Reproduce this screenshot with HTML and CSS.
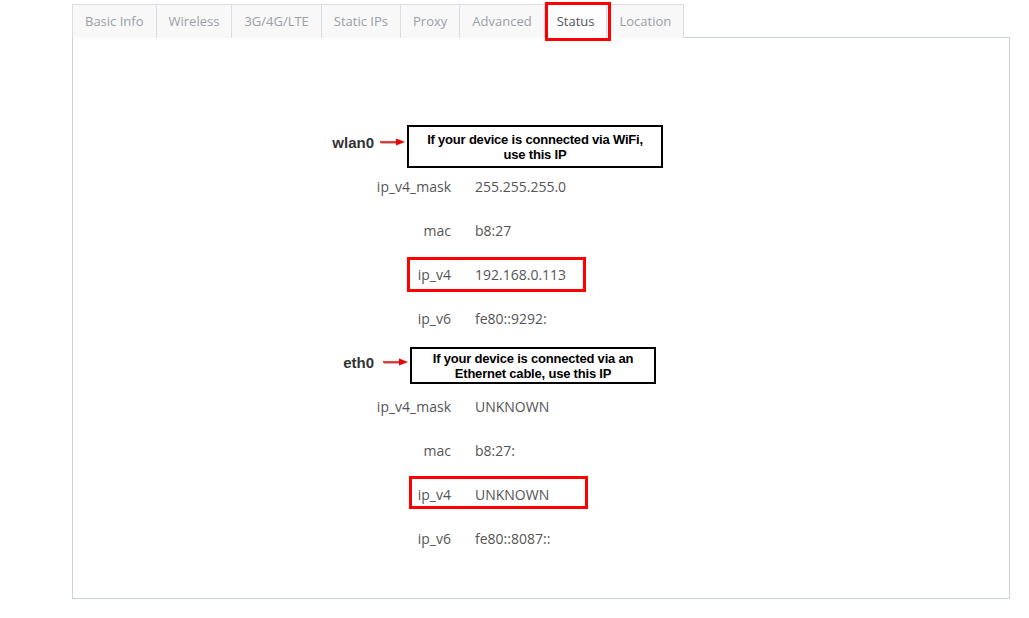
FILE: index.html
```html
<!DOCTYPE html>
<html>
<head>
<meta charset="utf-8">
<link rel="stylesheet" href="styles.css">
</head>
<body>
<div class="page">
  <ul class="tabs">
    <li class="tab">Basic Info</li>
    <li class="tab">Wireless</li>
    <li class="tab">3G/4G/LTE</li>
    <li class="tab">Static IPs</li>
    <li class="tab">Proxy</li>
    <li class="tab">Advanced</li>
    <li class="tab active">Status</li>
    <li class="tab">Location</li>
  </ul>
  <div class="panel">
    <div class="group">
      <div class="iface">
        <span class="iface-name">wlan0</span>
        <svg class="arrow" width="25" height="10" viewBox="0 0 25 10"><line x1="1" y1="6" x2="18" y2="6" stroke="#bbb" stroke-width="2"/><line x1="0" y1="5" x2="17" y2="5" stroke="#e00" stroke-width="1.5"/><polygon points="16,1.5 25,5 16,8.5" fill="#e00"/></svg>
        <div class="callout callout-wifi">If your device is connected via WiFi,<br>use this IP</div>
      </div>
      <div class="row"><span class="key">ip_v4_mask</span><span class="val">255.255.255.0</span></div>
      <div class="row"><span class="key">mac</span><span class="val">b8:27</span></div>
      <div class="row mark mark-wifi"><span class="key">ip_v4</span><span class="val">192.168.0.113</span></div>
      <div class="row"><span class="key">ip_v6</span><span class="val">fe80::9292:</span></div>
    </div>
    <div class="group">
      <div class="iface">
        <span class="iface-name">eth0</span>
        <svg class="arrow arrow-eth" width="25" height="10" viewBox="0 0 25 10"><line x1="1" y1="6" x2="18" y2="6" stroke="#bbb" stroke-width="2"/><line x1="0" y1="5" x2="17" y2="5" stroke="#e00" stroke-width="1.5"/><polygon points="16,1.5 25,5 16,8.5" fill="#e00"/></svg>
        <div class="callout callout-eth">If your device is connected via an<br>Ethernet cable, use this IP</div>
      </div>
      <div class="row"><span class="key">ip_v4_mask</span><span class="val">UNKNOWN</span></div>
      <div class="row"><span class="key">mac</span><span class="val">b8:27:</span></div>
      <div class="row mark mark-eth"><span class="key">ip_v4</span><span class="val">UNKNOWN</span></div>
      <div class="row"><span class="key">ip_v6</span><span class="val">fe80::8087::</span></div>
    </div>
  </div>
</div>
</body>
</html>
```

FILE: styles.css
```css
*, *::before, *::after { box-sizing: border-box; }
html, body { margin: 0; padding: 0; background: #fff; }
body { font-family: "Open Sans", "Liberation Sans", sans-serif; font-size: 14px; color: #555; }

.page { padding: 4px 0 0 72px; width: 1010px; }

.tabs { list-style: none; margin: 0; padding: 0; display: flex; height: 33px; font-size: 13px; }
.tab {
  position: relative;
  height: 34px;
  padding: 0 12px;
  line-height: 33px;
  color: #9a9ea6;
  background: #f8f8f8;
  border: 1px solid #d9dde3;
  border-bottom: none;
  margin-right: -1px;
  white-space: nowrap;
}
.tab.active { background: #fff; color: #4f5560; z-index: 1; }
.tab.active::after {
  content: "";
  position: absolute;
  left: 0; top: -3px;
  width: 66px; height: 39px;
  border: 3px solid #f00;
}

.panel {
  border: 1px solid #c9d1dc;
  height: 562px;
  width: 938px;
  padding-top: 82px;
}

.group { margin-left: 228px; }

.iface { display: flex; align-items: center; height: 44px; }
.iface-name {
  width: 73px;
  text-align: right;
  font-family: "Liberation Sans", Arial, sans-serif;
  font-weight: bold;
  font-size: 15px;
  color: #333;
}
.arrow { margin-left: 6px; flex: none; }
.arrow-eth { margin-left: 9px; }

.callout {
  align-self: flex-start;
  flex: none;
  border: 2px solid #000;
  background: #fff;
  color: #000;
  font-family: "Liberation Sans", Arial, sans-serif;
  font-weight: bold;
  font-size: 13px;
  letter-spacing: -0.2px;
  line-height: 15px;
  text-align: center;
  display: flex;
  align-items: center;
  justify-content: center;
}
.callout-wifi { width: 256px; height: 43px; margin-left: 2px; margin-top: 5px; }
.callout-eth { width: 246px; height: 37px; margin-left: 2px; margin-top: 7px; }

.row {
  position: relative;
  display: grid;
  grid-template-columns: 150px auto;
  column-gap: 24px;
  height: 44px;
  align-items: center;
}
.key { text-align: right; }
.val { white-space: nowrap; }

.mark::after {
  content: "";
  position: absolute;
  border: 3px solid #f00;
}
.mark-wifi::after { left: 106px; top: 5px; width: 179px; height: 35px; }
.mark-eth::after { left: 108px; top: 4px; width: 179px; height: 33px; }
```
